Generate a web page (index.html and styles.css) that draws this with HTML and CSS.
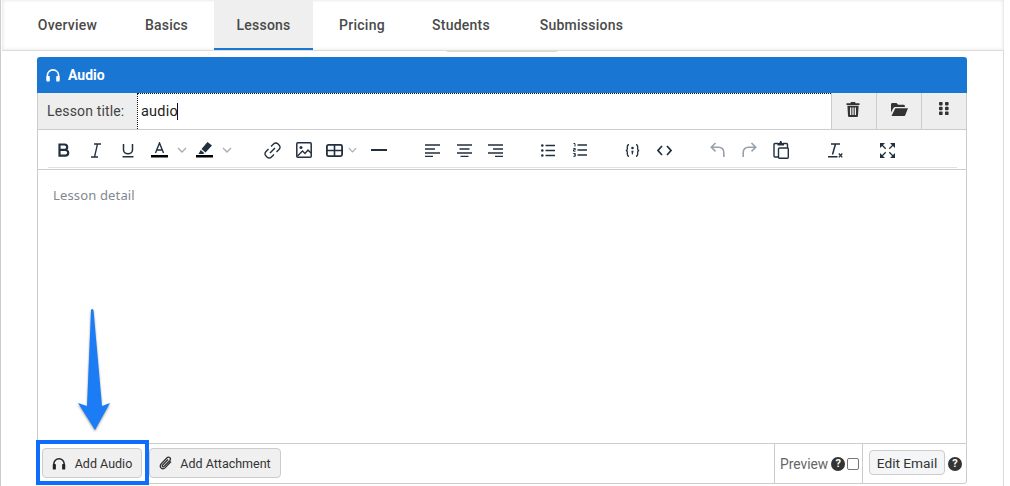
FILE: index.html
```html
<!DOCTYPE html>
<html lang="en">
<head>
<meta charset="utf-8">
<title>Lesson editor</title>
<link rel="stylesheet" href="styles.css">
</head>
<body>
<div class="page">
  <nav class="tabs">
    <a class="tab t1">Overview</a>
    <a class="tab t2">Basics</a>
    <a class="tab t3 active">Lessons</a>
    <a class="tab t4">Pricing</a>
    <a class="tab t5">Students</a>
    <a class="tab t6">Submissions</a>
  </nav>
  <div class="tab-shadow"></div>
  <section class="lesson">
    <header class="lesson-head">
      <svg class="head-ico" viewBox="0 0 16 16"><path d="M2 13V8a6 6 0 0 1 12 0v5" fill="none" stroke="#fff" stroke-width="1.7"/><rect x="1" y="8.5" width="3.6" height="6" rx="1" fill="#fff"/><rect x="11.4" y="8.5" width="3.6" height="6" rx="1" fill="#fff"/></svg>
      <span>Audio</span>
    </header>
    <div class="title-row">
      <label class="title-label">Lesson title:</label>
      <div class="title-input"><span>audio</span><i class="caret-bar"></i></div>
      <button class="title-btn trash"><svg width="14" height="15" viewBox="0 0 14 15"><path fill="#333" d="M5 0h4l.6 1.2H13.5v1.7H.5V1.200H4.400zM1.400 3.800h11.200l-.6 10a1.200 1.200 0 0 1-1.200 1.200H3.200A1.200 1.200 0 0 1 2 13.800zM4 5.500v7.500h1.300V5.500zm2.350 0v7.500h1.300V5.500zm2.350 0v7.500H10V5.500z"/></svg></button>
      <button class="title-btn"><svg width="17" height="13" viewBox="0 0 17 13"><path fill="#333" d="M0 1.300C0 .6.600 0 1.300 0h4.200l1.700 1.700h5.400c.7 0 1.300.6 1.300 1.300v1H4.300c-.8 0-1.500.4-1.900 1.100L0 9.500zM4.300 5.200H17l-2.700 6.800c-.2.600-.8 1-1.400 1H.5z"/></svg></button>
      <button class="title-btn"><svg width="10" height="13" viewBox="0 0 10 13"><g fill="#333"><rect x="0" y="0" width="3.600" height="3.400" rx=".8"/><rect x="6" y="0" width="3.600" height="3.400" rx=".8"/><rect x="0" y="4.800" width="3.600" height="3.400" rx=".8"/><rect x="6" y="4.800" width="3.600" height="3.400" rx=".8"/><rect x="0" y="9.600" width="3.600" height="3.400" rx=".8"/><rect x="6" y="9.600" width="3.600" height="3.400" rx=".8"/></g></svg></button>
    </div>
    <div class="toolbar-wrap">
      <div class="toolbar">
        <span class="tb"><svg width="14" height="14" viewBox="0 0 14 14"><path fill="none" stroke="#222f3e" stroke-width="2.200" d="M2.500 1.500h5a2.700 2.700 0 0 1 0 5.400h-5zm0 5.400h5.800a2.900 2.900 0 0 1 0 5.800H2.500z"/></svg></span>
        <span class="tb"><svg width="12" height="15" viewBox="0 0 12 15"><path fill="none" stroke="#222f3e" stroke-width="1.300" d="M4 1h7M1 14h7M7.500 1 4.500 14"/></svg></span>
        <span class="tb tb-u"><svg width="14" height="15" viewBox="0 0 14 15"><path fill="none" stroke="#222f3e" stroke-width="1.500" d="M2.500 1v6a4.500 3.800 0 0 0 9 0V1M1.500 13.800h11"/></svg></span>
        <span class="tb"><svg width="17" height="16" viewBox="0 0 17 16"><path fill="none" stroke="#222f3e" stroke-width="1.400" d="M4.500 11 8.500 1l4 10M6 8h5"/><rect x="0" y="13" width="17" height="2.500" fill="#000"/></svg></span>
        <span class="tc"><svg width="10" height="6" viewBox="0 0 10 6"><path class="chev" d="M1 1l4 4 4-4"/></svg></span>
        <span class="tb"><svg width="17" height="16" viewBox="0 0 17 16"><path fill="#222f3e" d="M11.500 0 16 3.500 9.500 10.500 5.500 7zM4.700 8l3.800 3.300-1.500.7H2.500z"/><rect x="0" y="13" width="17" height="2.500" fill="#000"/></svg></span>
        <span class="tc"><svg width="10" height="6" viewBox="0 0 10 6"><path class="chev" d="M1 1l4 4 4-4"/></svg></span>
        <span class="tb g1"><svg width="17" height="17" viewBox="0 0 17 17"><g fill="none" stroke="#222f3e" stroke-width="1.400"><path d="M7 4.500 9.800 1.800a2.800 2.800 0 0 1 4 0l1.400 1.400a2.800 2.800 0 0 1 0 4L12.500 9.900"/><path d="M10 12.500 7.200 15.200a2.800 2.800 0 0 1-4 0l-1.400-1.400a2.800 2.800 0 0 1 0-4L4.500 7.100"/><path d="m6 11 5-5"/></g></svg></span>
        <span class="tb"><svg width="16" height="16" viewBox="0 0 16 16"><rect x=".8" y=".8" width="14.400" height="14.400" rx="1" fill="none" stroke="#222f3e" stroke-width="1.500"/><circle cx="5" cy="5.500" r="1.500" fill="#222f3e"/><path d="M1.500 14 6.500 9l2.500 2.500L12 8l3 3" fill="none" stroke="#222f3e" stroke-width="1.300"/></svg></span>
        <span class="tb tb-t"><svg width="17" height="13" viewBox="0 0 17 13"><rect x=".9" y=".9" width="15.200" height="11.200" rx="1.500" fill="none" stroke="#222f3e" stroke-width="1.800"/><path d="M1 6.500h15M8.500 1v11" stroke="#222f3e" stroke-width="1.600"/></svg></span>
        <span class="tc tc-t"><svg width="10" height="6" viewBox="0 0 10 6"><path class="chev" d="M1 1l4 4 4-4"/></svg></span>
        <span class="tb tb-hr"><svg width="16" height="2" viewBox="0 0 16 2"><rect width="16" height="2" fill="#222f3e"/></svg></span>
        <span class="tb g2"><svg class="lines" width="15" height="13" viewBox="0 0 15 13"><path d="M0 1h15M0 5h10M0 9h15M0 12.500h8"/></svg></span>
        <span class="tb"><svg class="lines" width="15" height="13" viewBox="0 0 15 13"><path d="M0 1h15M2.500 5h10M0 9h15M3.500 12.500h8"/></svg></span>
        <span class="tb tb-u"><svg class="lines" width="15" height="13" viewBox="0 0 15 13"><path d="M0 1h15M5 5h10M0 9h15M7 12.500h8"/></svg></span>
        <span class="tb g2"><svg class="lines" width="14" height="13" viewBox="0 0 14 13"><path d="M4.500 1.500H14M4.500 6.500H14M4.500 11.500H14"/><g fill="#222f3e" stroke="none"><circle cx="1.300" cy="1.500" r="1.300"/><circle cx="1.300" cy="6.500" r="1.300"/><circle cx="1.300" cy="11.500" r="1.300"/></g></svg></span>
        <span class="tb tb-u"><svg class="lines" width="14" height="14" viewBox="0 0 14 14"><path d="M4.500 2H14M4.500 7H14M4.500 12H14"/><path stroke-width="1" d="M.5 .5h1.500v3M.3 5.500h2v1.300H.5v1.400h2M.3 10.500h2v1.300H1M2.300 11.800v1.500H.3"/></svg></span>
        <span class="tb g2"><svg width="15" height="13" viewBox="0 0 15 13"><path fill="none" stroke="#222f3e" stroke-width="1.300" d="M4 .7C2.300.7 2.300 1.800 2.300 3.500v1.700C2.300 6 1.800 6.500.8 6.500c1 0 1.500.5 1.500 1.300v1.700c0 1.700 0 2.800 1.700 2.800M11 .7c1.700 0 1.700 1.100 1.700 2.800v1.700c0 .8.500 1.300 1.500 1.300-1 0-1.500.5-1.500 1.300v1.700c0 1.700 0 2.800-1.700 2.800"/><circle cx="7.500" cy="4" r="1.300" fill="#222f3e"/><path d="M6.400 6.800h2.200L7.700 10.500H6.900z" fill="#222f3e"/></svg></span>
        <span class="tb"><svg width="15" height="11" viewBox="0 0 15 11"><path fill="none" stroke="#222f3e" stroke-width="1.700" d="M5 1 1 5.500 5 10M10 1l4 4.500-4 4.500"/></svg></span>
        <span class="tb g2"><svg width="15" height="16" viewBox="0 0 15 16"><path fill="none" stroke="#98a1ab" stroke-width="1.600" d="M5.500 1 1.300 5.200l4.200 4.200M1.500 5.200h7.300a5 5 0 0 1 5 5V15"/></svg></span>
        <span class="tb"><svg width="15" height="16" viewBox="0 0 15 16"><path fill="none" stroke="#98a1ab" stroke-width="1.600" d="M9.500 1l4.200 4.200-4.200 4.200M13.500 5.200H6.200a5 5 0 0 0-5 5V15"/></svg></span>
        <span class="tb"><svg width="16" height="18" viewBox="0 0 16 18"><g fill="none" stroke="#222f3e" stroke-width="1.400"><path d="M5 2.500H2a1 1 0 0 0-1 1V15a1 1 0 0 0 1 1h3"/><path d="M10 2.500h3.500a1 1 0 0 1 1 1V7"/><rect x="5.500" y="7" width="9.800" height="10.200" rx="1"/></g><path fill="#222f3e" d="M4.500 2h2C6.500.500 7 0 7.700 0s1.300.500 1.300 2h2v2.500H4.500z"/></svg></span>
        <span class="tb g4"><svg width="15" height="15" viewBox="0 0 15 15"><path fill="none" stroke="#222f3e" stroke-width="1.500" d="M3 1h9M7.500 1 4.500 11.500M0 13.800h9.500"/><path fill="none" stroke="#222f3e" stroke-width="1.300" d="M10.800 10.500l3.500 3.900M14.300 10.500l-3.500 3.900"/></svg></span>
        <span class="tb g3"><svg width="15" height="15" viewBox="0 0 15 15"><g fill="none" stroke="#222f3e" stroke-width="1.300"><path d="M1.500 1.500l4.200 4.200M13.500 1.500 9.300 5.700M1.500 13.500l4.200-4.200M13.500 13.500 9.300 9.300"/></g><g fill="#222f3e"><path d="M0 0h5L0 5zM15 0v5L10 0zM0 15v-5l5 5zM15 15h-5l5-5z"/></g></svg></span>
      </div>
    </div>
    <div class="editor"><span class="placeholder">Lesson detail</span></div>
    <footer class="foot">
      <div class="foot-left">
        <button class="btn btn-audio"><svg width="14" height="13" viewBox="0 0 16 15"><path d="M2 12V8a6 6 0 0 1 12 0v4" fill="none" stroke="#222" stroke-width="1.700"/><rect x=".8" y="8" width="3.600" height="6.500" rx="1" fill="#222"/><rect x="11.600" y="8" width="3.600" height="6.500" rx="1" fill="#222"/></svg>Add Audio</button>
        <button class="btn btn-attach"><svg width="13" height="14" viewBox="0 0 13 14"><path fill="none" stroke="#333" stroke-width="1.300" d="M12 5.500 6.300 11.600c-1.300 1.300-3 1.400-4.200.4s-1.100-2.800.2-4.200L7.800 2c1-1 2.300-1.100 3.100-.3s.7 2-.3 3L5.300 10.300c-.6.600-1.300.7-1.700.3s-.3-1.200.3-1.800L9 3.500"/></svg>Add Attachment</button>
      </div>
      <div class="foot-preview">
        <span>Preview</span>
        <span class="help">?</span>
        <i class="check"></i>
      </div>
      <div class="foot-email">
        <button class="btn-email">Edit Email</button>
        <span class="help">?</span>
      </div>
    </footer>
  </section>
  <div class="highlight"></div>
  <svg class="arrow" width="40" height="126" viewBox="0 0 40 126"><defs><filter id="sh" x="-30%" y="-10%" width="160%" height="120%"><feGaussianBlur stdDeviation=".8"/></filter></defs><path d="M18 2Q19 0 20.500 2L29 98 37 95 22 122 5 95 14 98z" fill="#444" opacity=".5" filter="url(#sh)" transform="translate(0 1.500)"/><path d="M18 2Q19 0 20.500 2L29 98 37 95 22 122 5 95 14 98z" fill="#1c7cf5"/></svg>
</div>
</body>
</html>
```
FILE: styles.css
```css
* { box-sizing: border-box; }
html, body { margin: 0; padding: 0; height: 486px; overflow: hidden; background: #fff; }
body { font-family: Roboto, "Liberation Sans", sans-serif; color: #333; }
.page { position: relative; width: 1004px; height: 486px; border-left: 1px solid #ccc; border-right: 1px solid #d8d8e0; }
.tabs { display: flex; height: 51px; margin: 0 -1px 0 1px; padding-left: 12px; background: #fff; border-bottom: 1px solid #dcdcd8; box-shadow: inset 0 -5px 5px -5px #e8e8e4, inset 3px 0 3px -2px #e6e6e2, inset -3px 0 3px -2px #e2e2de, inset 0 3px 3px -2px #eee; }
.tab { display: flex; align-items: center; justify-content: center; height: 50px; font-size: 14px; font-weight: 500; color: #4a4a4a; letter-spacing: .25px; }
.t1 { width: 107px; }
.t2 { width: 91px; margin-right: 2px; }
.t3 { width: 99px; background: #efefef; border-bottom: 2px solid #1976d2; padding-top: 2px; }
.t4 { width: 98px; }
.t5 { width: 100px; }
.t6 { width: 141px; }
.tab-shadow { width: 112px; height: 2px; margin: -1px 0 0 445px; background: #dcdcd6; border-radius: 0 0 3px 3px; }
.lesson { margin: 5px 0 0 36px; width: 930px; height: 427px; display: flex; flex-direction: column; border-radius: 3px; }
.lesson-head { display: flex; align-items: center; gap: 7px; height: 36px; padding-left: 8px; background: #1976d2; color: #fff; font-size: 14px; font-weight: 700; border-radius: 3px 3px 0 0; flex: none; }
.head-ico { width: 16px; height: 15px; }
.title-row { display: flex; height: 37px; flex: none; border-left: 1px solid #ccc; border-right: 1px solid #ccc; border-bottom: 1px solid #ccc; }
.title-label { width: 99px; background: #eee; color: #444; font-size: 14px; letter-spacing: .15px; display: flex; align-items: center; padding-left: 9px; }
.title-input { flex: 1; display: flex; align-items: center; padding-left: 3px; font-size: 14.500px; color: #222; border-top: 1px dotted #111; border-left: 1px dotted #111; letter-spacing: .2px; }
.caret-bar { width: 1px; height: 17px; background: #111; margin-left: -1px; }
.title-btn { width: 45px; background: #eee; border: 0; border-left: 1px solid #ccc; padding: 0 0 4px; display: flex; align-items: center; justify-content: center; }
.title-btn:last-child { padding-bottom: 5px; }
.title-btn.trash { padding-right: 2px; }
.toolbar-wrap { height: 40px; flex: none; padding: 0 9px 0 10px; border-left: 1px solid #ccc; border-right: 1px solid #ccc; border-bottom: 1px solid #ccc; }
.toolbar { display: flex; align-items: center; height: 38px; border-bottom: 1px solid #e2e2e2; padding-top: 3px; }
.tb { width: 32px; height: 32px; flex: none; display: flex; align-items: center; justify-content: center; }
.tb-u { width: 31px; }
.tb-t { width: 28px; }
.tb-hr { margin-left: 6px; }
.tc { width: 13px; flex: none; display: flex; align-items: center; justify-content: center; }
.tc-t { width: 9px; }
.g1 { margin-left: 23px; }
.g2 { margin-left: 21px; }
.g3 { margin-left: 20px; }
.g4 { margin-left: 22px; }
.chev { fill: none; stroke: #a5acb4; stroke-width: 1.300; }
.lines { fill: none; stroke: #222f3e; stroke-width: 1.700; }
.editor { flex: 1; padding: 16px 15px; border-left: 1px solid #ccc; border-right: 1px solid #ccc; font-family: "Noto Sans", "Open Sans", sans-serif; font-size: 13px; color: #808890; letter-spacing: .15px; }
.foot { display: flex; height: 41px; flex: none; border: 1px solid #ccc; border-radius: 0 0 3px 3px; }
.foot-left { flex: 1; display: flex; align-items: center; gap: 7px; padding: 0 0 1px 4px; }
.btn { height: 30px; display: flex; align-items: center; justify-content: center; gap: 8px; background: #f0f0f0; border: 1px solid #ccc; border-radius: 4px; font: 12.500px Roboto, sans-serif; color: #333; padding: 0; }
.btn-audio { width: 100px; gap: 9px; }
.btn-attach { width: 132px; }
.foot-preview { width: 88px; display: flex; align-items: center; border-left: 1px solid #ccc; padding-left: 5px; font-size: 13.800px; color: #666; }
.foot-preview .help { margin-left: 3px; }
.foot-email { width: 104px; display: flex; align-items: center; gap: 3px; padding: 0 0 2px 6px; border-left: 1px solid #ccc; }
.foot-email .help { margin-top: 2px; }
.help { width: 14px; height: 14px; flex: none; display: inline-flex; align-items: center; justify-content: center; border-radius: 50%; background: #333; color: #fff; font-size: 11px; font-weight: 700; }
.check { width: 12px; height: 12px; margin-left: 2px; border: 1px solid #767676; border-radius: 2px; background: #fff; }
.btn-email { width: 76px; height: 25px; border: 1px solid #ccc; border-radius: 4px; background: #f4f5f7; font: 13.700px Roboto, sans-serif; color: #333; padding: 0; }
.highlight { position: absolute; left: 35px; top: 440px; width: 113px; height: 45px; border: 4px solid #0d6efd; }
.arrow { position: absolute; left: 72px; top: 308px; }
```
